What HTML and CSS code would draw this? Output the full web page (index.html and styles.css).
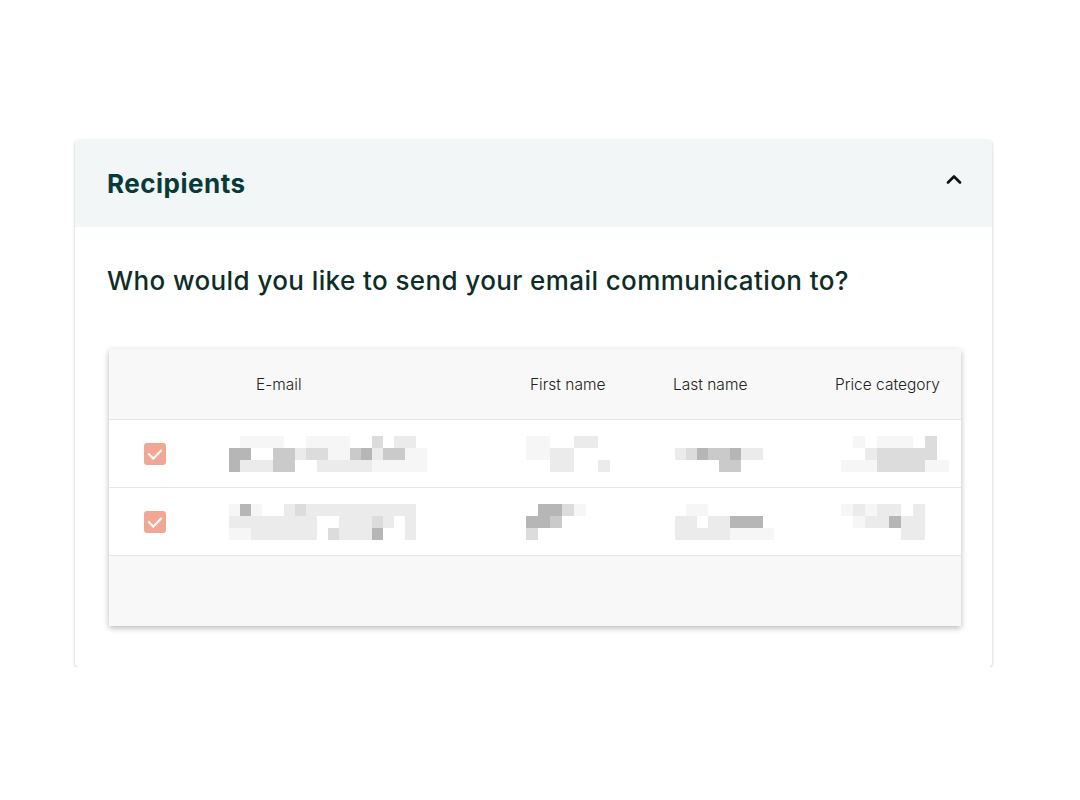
FILE: index.html
```html
<!DOCTYPE html>
<html lang="en">
<head>
    <meta charset="UTF-8">
    <meta name="viewport" content="width=device-width, initial-scale=1.0">
    <title>Recipients</title>
    <link rel="stylesheet" href="styles.css">
</head>
<body>
    <section class="card">
        <header class="card-head">
            <h2>Recipients</h2>
            <svg class="chevron" width="16" height="10" viewBox="0 0 16 10">
                <path d="M2 8.5 L8 2.5 L14 8.5" fill="none" stroke="#111" stroke-width="2.6" stroke-linecap="round" stroke-linejoin="round"/>
            </svg>
        </header>

        <div class="card-body">
            <h3 class="question">Who would you like to send your email communication to?</h3>

            <div class="grid-table">
                <div class="row head">
                    <div class="cell"></div>
                    <div class="cell email">E-mail</div>
                    <div class="cell first">First name</div>
                    <div class="cell last">Last name</div>
                    <div class="cell price">Price category</div>
                </div>

                <!-- row 1 -->
                <div class="row">
                    <div class="cell check-cell"><span class="check"></span></div>
                    <div class="cell email">
                        <div class="mosaic" style="grid-template-columns: repeat(18, 11px)">
                            <i></i><i class="s1"></i><i class="s1"></i><i class="s1"></i><i class="s1"></i><i></i><i></i><i class="s1"></i><i class="s1"></i><i class="s1"></i><i class="s1"></i><i></i><i></i><i class="s3"></i><i></i><i class="s2"></i><i class="s2"></i><i></i>
                            <i class="s5"></i><i class="s5"></i><i></i><i></i><i class="s4"></i><i class="s4"></i><i class="s2"></i><i class="s3"></i><i class="s3"></i><i class="s1"></i><i class="s1"></i><i class="s4"></i><i class="s5"></i><i class="s2"></i><i class="s4"></i><i class="s4"></i><i class="s1"></i><i class="s1"></i>
                            <i class="s5"></i><i class="s2"></i><i class="s2"></i><i class="s2"></i><i class="s4"></i><i class="s4"></i><i></i><i></i><i class="s2"></i><i class="s2"></i><i class="s2"></i><i class="s2"></i><i class="s2"></i><i class="s1"></i><i class="s1"></i><i class="s1"></i><i class="s1"></i><i class="s1"></i>
                        </div>
                    </div>
                    <div class="cell first">
                        <div class="mosaic" style="grid-template-columns: repeat(7, 12px)">
                            <i class="s1"></i><i class="s1"></i><i></i><i></i><i class="s2"></i><i class="s2"></i><i></i>
                            <i class="s1"></i><i class="s1"></i><i class="s2"></i><i class="s2"></i><i></i><i></i><i></i>
                            <i></i><i></i><i class="s2"></i><i class="s2"></i><i></i><i></i><i class="s2"></i>
                        </div>
                    </div>
                    <div class="cell last">
                        <div class="mosaic" style="grid-template-columns: repeat(8, 11px)">
                            <i></i><i></i><i></i><i></i><i></i><i></i><i></i><i></i>
                            <i class="s2"></i><i class="s3"></i><i class="s5"></i><i class="s4"></i><i class="s4"></i><i class="s5"></i><i class="s2"></i><i class="s2"></i>
                            <i></i><i></i><i></i><i></i><i class="s4"></i><i class="s4"></i><i></i><i></i>
                        </div>
                    </div>
                    <div class="cell price">
                        <div class="mosaic" style="grid-template-columns: repeat(9, 12px)">
                            <i></i><i class="s1"></i><i></i><i class="s1"></i><i class="s1"></i><i class="s1"></i><i></i><i class="s3"></i><i></i>
                            <i></i><i></i><i class="s2"></i><i class="s3"></i><i class="s3"></i><i class="s3"></i><i class="s3"></i><i class="s3"></i><i></i>
                            <i class="s1"></i><i class="s1"></i><i class="s1"></i><i class="s3"></i><i class="s3"></i><i class="s3"></i><i class="s3"></i><i class="s1"></i><i class="s1"></i>
                        </div>
                    </div>
                </div>

                <!-- row 2 -->
                <div class="row">
                    <div class="cell check-cell"><span class="check"></span></div>
                    <div class="cell email">
                        <div class="mosaic" style="grid-template-columns: repeat(17, 11px)">
                            <i class="s1"></i><i class="s5"></i><i class="s1"></i><i></i><i></i><i class="s2"></i><i class="s3"></i><i class="s2"></i><i class="s2"></i><i class="s2"></i><i class="s2"></i><i class="s2"></i><i class="s2"></i><i class="s2"></i><i class="s2"></i><i class="s2"></i><i class="s2"></i>
                            <i class="s2"></i><i class="s2"></i><i class="s2"></i><i class="s2"></i><i class="s2"></i><i class="s2"></i><i class="s2"></i><i class="s2"></i><i></i><i></i><i class="s2"></i><i class="s2"></i><i class="s2"></i><i class="s3"></i><i class="s2"></i><i></i><i class="s2"></i>
                            <i class="s1"></i><i class="s1"></i><i class="s2"></i><i class="s2"></i><i class="s2"></i><i class="s2"></i><i class="s2"></i><i class="s2"></i><i></i><i class="s3"></i><i class="s2"></i><i class="s2"></i><i class="s2"></i><i class="s5"></i><i></i><i></i><i class="s2"></i>
                        </div>
                    </div>
                    <div class="cell first">
                        <div class="mosaic" style="grid-template-columns: repeat(5, 12px)">
                            <i></i><i class="s5"></i><i class="s5"></i><i class="s3"></i><i class="s1"></i>
                            <i class="s5"></i><i class="s5"></i><i class="s4"></i><i></i><i></i>
                            <i class="s3"></i><i></i><i></i><i></i><i></i>
                        </div>
                    </div>
                    <div class="cell last">
                        <div class="mosaic" style="grid-template-columns: repeat(9, 11px)">
                            <i></i><i class="s1"></i><i class="s1"></i><i></i><i></i><i></i><i></i><i></i><i></i>
                            <i class="s2"></i><i class="s2"></i><i></i><i class="s2"></i><i class="s2"></i><i class="s5"></i><i class="s5"></i><i class="s5"></i><i></i>
                            <i class="s2"></i><i class="s2"></i><i class="s2"></i><i class="s2"></i><i class="s2"></i><i class="s1"></i><i class="s1"></i><i class="s1"></i><i class="s1"></i>
                        </div>
                    </div>
                    <div class="cell price">
                        <div class="mosaic" style="grid-template-columns: repeat(7, 12px)">
                            <i class="s1"></i><i class="s2"></i><i class="s1"></i><i class="s2"></i><i class="s2"></i><i></i><i class="s2"></i>
                            <i></i><i class="s1"></i><i class="s2"></i><i class="s2"></i><i class="s5"></i><i class="s2"></i><i class="s2"></i>
                            <i></i><i></i><i></i><i></i><i></i><i class="s2"></i><i class="s2"></i>
                        </div>
                    </div>
                </div>

                <div class="table-foot"></div>
            </div>
        </div>
    </section>
</body>
</html>
```

FILE: styles.css
```css
body {
    margin: 0;
    padding: 140px 0 0 75px;
    background: #fff;
    font-family: 'Inter', 'Noto Sans', sans-serif;
    color: #222;
}

/* Card */
.card {
    width: 917px;
    background: #fff;
    border-radius: 4px;
    box-shadow: 0 1px 3px rgba(0, 0, 0, 0.25);
    overflow: hidden;
}

.card-head {
    height: 87px;
    background: #f2f6f6;
    display: flex;
    align-items: center;
    justify-content: space-between;
    padding: 0 30px 0 32px;
}

.card-head h2 {
    margin: 0;
    font-size: 26px;
    font-weight: 700;
    color: #073b3a;
    letter-spacing: 0.5px;
}

.chevron {
    display: block;
    margin-top: -10px;
}

.card-body {
    padding: 38px 31px 41px 34px;
}

.question {
    margin: 0 0 53px -2px;
    font-size: 26px;
    font-weight: 500;
    color: #0d2e28;
    letter-spacing: 0.4px;
}

/* Table */
.grid-table {
    box-shadow: 0 2px 6px rgba(0, 0, 0, 0.28);
    background: #fff;
}

.row {
    display: grid;
    grid-template-columns: 106px 295px 145px 160px 146px;
    height: 67px;
    align-items: center;
    border-bottom: 1px solid #e4e4e4;
}

.row.head {
    height: 70px;
    background: #f8f8f8;
    font-size: 15.5px;
    font-weight: 300;
    color: #222;
}

.cell.email { padding-left: 14px; }
.cell.first { padding-left: 16px; }
.cell.last { padding-left: 20px; }
.cell.price { padding-left: 26px; }

.head .cell.email { padding-left: 41px; }
.head .cell.first { padding-left: 20px; }
.head .cell.last { padding-left: 18px; }
.head .cell.price { padding-left: 20px; }

.check-cell {
    display: flex;
    padding-left: 35px;
}

.check {
    width: 22px;
    height: 22px;
    border-radius: 3px;
    background: #f1a795;
    position: relative;
}

.check::after {
    content: "";
    position: absolute;
    left: 7px;
    top: 3px;
    width: 6px;
    height: 11px;
    border: solid #fff;
    border-width: 0 2px 2px 0;
    transform: rotate(45deg);
}

.table-foot {
    height: 70px;
    background: #f8f8f8;
}

/* Blurred cell contents */
.mosaic {
    display: grid;
    grid-auto-rows: 12px;
}

.mosaic i { display: block; }
.mosaic .s1 { background: #f6f6f6; }
.mosaic .s2 { background: #ebebeb; }
.mosaic .s3 { background: #dcdcdc; }
.mosaic .s4 { background: #cacaca; }
.mosaic .s5 { background: #b6b6b6; }
```
